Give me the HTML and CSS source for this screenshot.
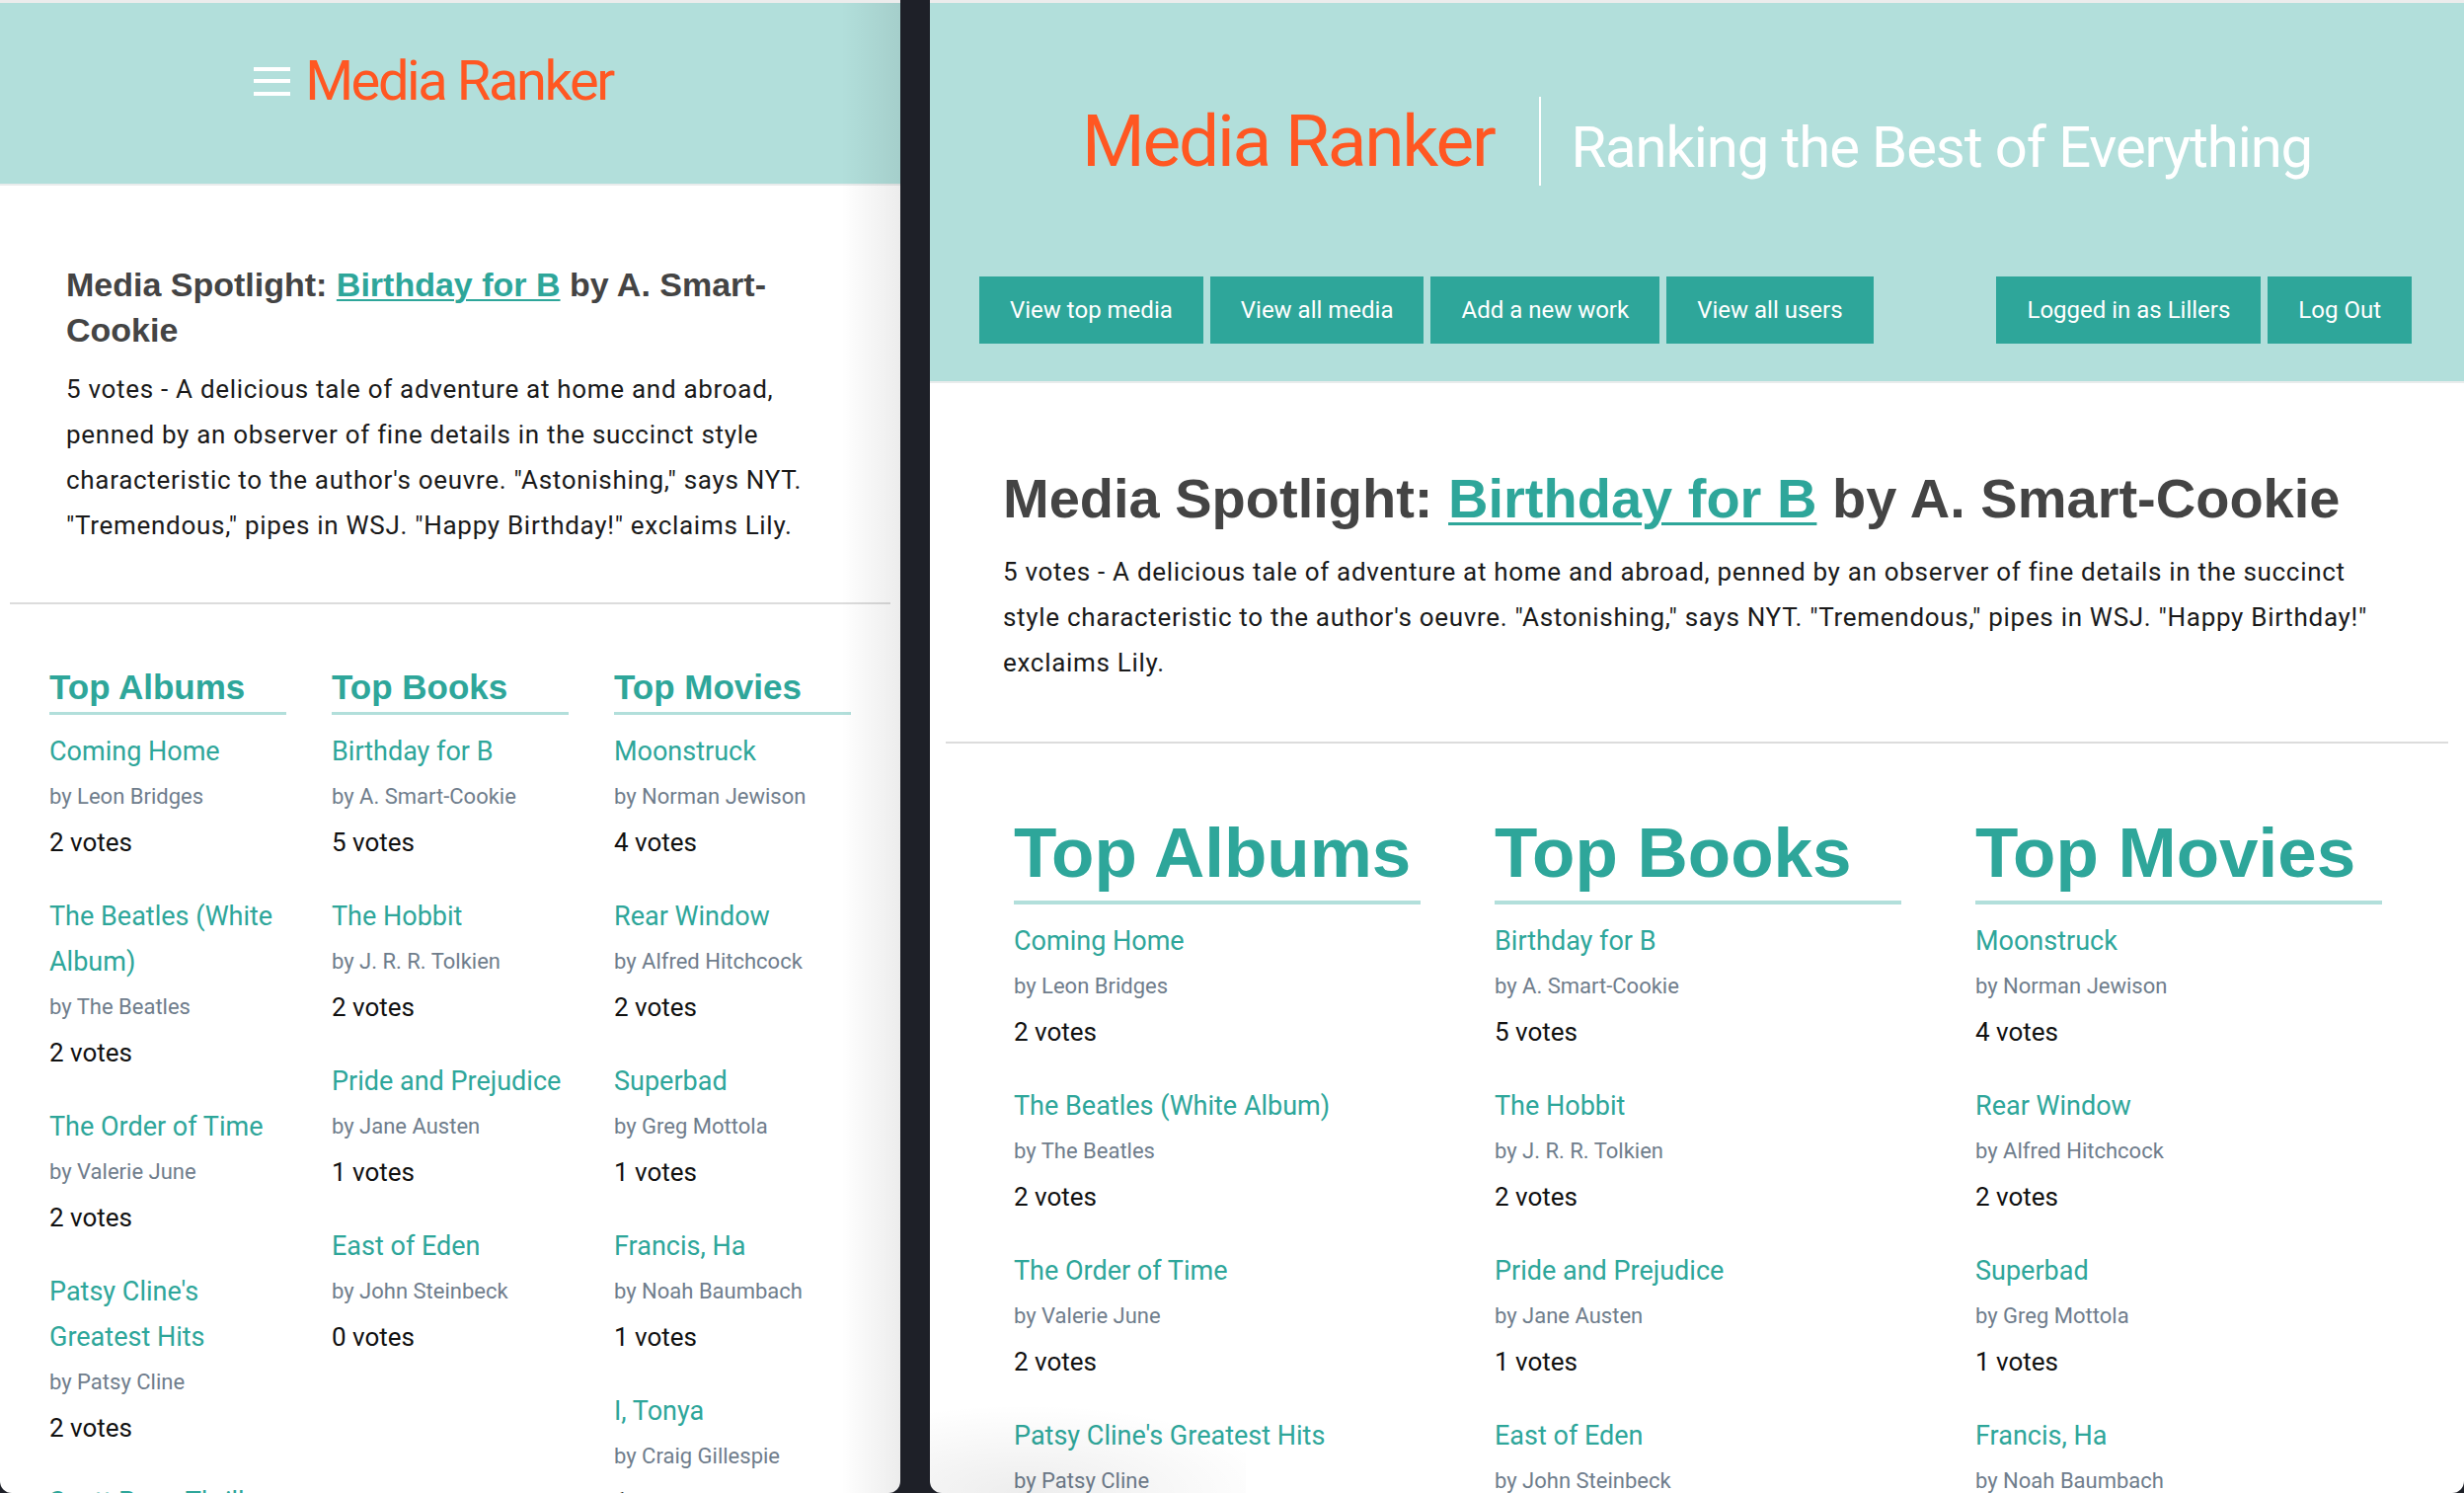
FILE: index.html
```html
<!DOCTYPE html>
<html lang="en">
<head>
<meta charset="utf-8">
<title>Media Ranker</title>
<link rel="stylesheet" href="styles.css">
</head>
<body>
<div class="desktop">

  <section class="window window-narrow">
    <header class="site-header header-small">
      <div class="title-bar">
        <svg class="menu-icon" width="37" height="29" viewBox="0 0 37 29" aria-hidden="true">
          <rect x="0" y="0" width="37" height="4" fill="#fff"/>
          <rect x="0" y="12" width="37" height="4" fill="#fff"/>
          <rect x="0" y="25" width="37" height="4" fill="#fff"/>
        </svg>
        <span class="brand brand-small">Media Ranker</span>
      </div>
    </header>
    <main class="content content-small">
      <section class="spotlight">
        <h2 class="spotlight-title">Media Spotlight: <a href="#">Birthday for B</a> by A. Smart-Cookie</h2>
        <p class="spotlight-text">5 votes - A delicious tale of adventure at home and abroad, penned by an observer of fine details in the succinct style characteristic to the author's oeuvre. "Astonishing," says NYT. "Tremendous," pipes in WSJ. "Happy Birthday!" exclaims Lily.</p>
      </section>
      <hr class="divider">
      <section class="top-lists">
        <div class="list-col">
          <h3 class="list-title">Top Albums</h3>
          <ul class="works">
            <li><a class="work-title" href="#">Coming Home</a><span class="work-by">by Leon Bridges</span><span class="work-votes">2 votes</span></li>
            <li><a class="work-title" href="#">The Beatles (White Album)</a><span class="work-by">by The Beatles</span><span class="work-votes">2 votes</span></li>
            <li><a class="work-title" href="#">The Order of Time</a><span class="work-by">by Valerie June</span><span class="work-votes">2 votes</span></li>
            <li><a class="work-title" href="#">Patsy Cline's Greatest Hits</a><span class="work-by">by Patsy Cline</span><span class="work-votes">2 votes</span></li>
            <li><a class="work-title" href="#">Scott Pope Thriller</a><span class="work-by">by Scott Pope</span><span class="work-votes">1 votes</span></li>
          </ul>
        </div>
        <div class="list-col">
          <h3 class="list-title">Top Books</h3>
          <ul class="works">
            <li><a class="work-title" href="#">Birthday for B</a><span class="work-by">by A. Smart-Cookie</span><span class="work-votes">5 votes</span></li>
            <li><a class="work-title" href="#">The Hobbit</a><span class="work-by">by J. R. R. Tolkien</span><span class="work-votes">2 votes</span></li>
            <li><a class="work-title" href="#">Pride and Prejudice</a><span class="work-by">by Jane Austen</span><span class="work-votes">1 votes</span></li>
            <li><a class="work-title" href="#">East of Eden</a><span class="work-by">by John Steinbeck</span><span class="work-votes">0 votes</span></li>
          </ul>
        </div>
        <div class="list-col">
          <h3 class="list-title">Top Movies</h3>
          <ul class="works">
            <li><a class="work-title" href="#">Moonstruck</a><span class="work-by">by Norman Jewison</span><span class="work-votes">4 votes</span></li>
            <li><a class="work-title" href="#">Rear Window</a><span class="work-by">by Alfred Hitchcock</span><span class="work-votes">2 votes</span></li>
            <li><a class="work-title" href="#">Superbad</a><span class="work-by">by Greg Mottola</span><span class="work-votes">1 votes</span></li>
            <li><a class="work-title" href="#">Francis, Ha</a><span class="work-by">by Noah Baumbach</span><span class="work-votes">1 votes</span></li>
            <li><a class="work-title" href="#">I, Tonya</a><span class="work-by">by Craig Gillespie</span><span class="work-votes">1 votes</span></li>
          </ul>
        </div>
      </section>
    </main>
  </section>

  <section class="window window-wide">
    <header class="site-header header-large">
      <div class="brand-row">
        <span class="brand brand-large">Media Ranker</span>
        <span class="brand-divider"></span>
        <span class="tagline">Ranking the Best of Everything</span>
      </div>
      <nav class="main-nav">
        <div class="nav-group">
          <a class="nav-button" href="#">View top media</a>
          <a class="nav-button" href="#">View all media</a>
          <a class="nav-button" href="#">Add a new work</a>
          <a class="nav-button" href="#">View all users</a>
        </div>
        <div class="nav-group">
          <a class="nav-button" href="#">Logged in as Lillers</a>
          <a class="nav-button" href="#">Log Out</a>
        </div>
      </nav>
    </header>
    <main class="content content-large">
      <section class="spotlight">
        <h2 class="spotlight-title">Media Spotlight: <a href="#">Birthday for B</a> by A. Smart-Cookie</h2>
        <p class="spotlight-text">5 votes - A delicious tale of adventure at home and abroad, penned by an observer of fine details in the succinct style characteristic to the author's oeuvre. "Astonishing," says NYT. "Tremendous," pipes in WSJ. "Happy Birthday!" exclaims Lily.</p>
      </section>
      <hr class="divider">
      <section class="top-lists">
        <div class="list-col">
          <h3 class="list-title">Top Albums</h3>
          <ul class="works">
            <li><a class="work-title" href="#">Coming Home</a><span class="work-by">by Leon Bridges</span><span class="work-votes">2 votes</span></li>
            <li><a class="work-title" href="#">The Beatles (White Album)</a><span class="work-by">by The Beatles</span><span class="work-votes">2 votes</span></li>
            <li><a class="work-title" href="#">The Order of Time</a><span class="work-by">by Valerie June</span><span class="work-votes">2 votes</span></li>
            <li><a class="work-title" href="#">Patsy Cline's Greatest Hits</a><span class="work-by">by Patsy Cline</span><span class="work-votes">2 votes</span></li>
          </ul>
        </div>
        <div class="list-col">
          <h3 class="list-title">Top Books</h3>
          <ul class="works">
            <li><a class="work-title" href="#">Birthday for B</a><span class="work-by">by A. Smart-Cookie</span><span class="work-votes">5 votes</span></li>
            <li><a class="work-title" href="#">The Hobbit</a><span class="work-by">by J. R. R. Tolkien</span><span class="work-votes">2 votes</span></li>
            <li><a class="work-title" href="#">Pride and Prejudice</a><span class="work-by">by Jane Austen</span><span class="work-votes">1 votes</span></li>
            <li><a class="work-title" href="#">East of Eden</a><span class="work-by">by John Steinbeck</span><span class="work-votes">0 votes</span></li>
          </ul>
        </div>
        <div class="list-col">
          <h3 class="list-title">Top Movies</h3>
          <ul class="works">
            <li><a class="work-title" href="#">Moonstruck</a><span class="work-by">by Norman Jewison</span><span class="work-votes">4 votes</span></li>
            <li><a class="work-title" href="#">Rear Window</a><span class="work-by">by Alfred Hitchcock</span><span class="work-votes">2 votes</span></li>
            <li><a class="work-title" href="#">Superbad</a><span class="work-by">by Greg Mottola</span><span class="work-votes">1 votes</span></li>
            <li><a class="work-title" href="#">Francis, Ha</a><span class="work-by">by Noah Baumbach</span><span class="work-votes">1 votes</span></li>
          </ul>
        </div>
      </section>
    </main>
  </section>

</div>
</body>
</html>
```

FILE: styles.css
```css
html, body {
  margin: 0;
  padding: 0;
}

body {
  width: 2496px;
  height: 1512px;
  overflow: hidden;
  background: #1e2028;
  font-family: Roboto, "Liberation Sans", Arial, sans-serif;
  color: #1a1a1a;
}

.desktop {
  display: flex;
  gap: 30px;
  height: 1512px;
}

.window {
  position: relative;
  box-sizing: border-box;
  height: 1512px;
  overflow: hidden;
  background: #fff;
  border-top: 3px solid #ececec;
  border-radius: 0 0 12px 12px;
}

.window-narrow {
  flex: none;
  width: 912px;
}

.window-narrow::after {
  content: "";
  position: absolute;
  top: 0;
  right: 0;
  bottom: 0;
  width: 60px;
  background: linear-gradient(to right, rgba(0, 0, 0, 0), rgba(0, 0, 0, 0.075));
  pointer-events: none;
}

.window-wide {
  flex: 1;
}

.window-wide::after {
  content: "";
  position: absolute;
  left: 0;
  bottom: 0;
  width: 320px;
  height: 110px;
  background: radial-gradient(ellipse 260px 90px at 30% 100%, rgba(0, 0, 0, 0.07), rgba(0, 0, 0, 0));
  pointer-events: none;
}

/* Header */
.site-header {
  box-sizing: border-box;
  background: #b2dfdb;
  border-bottom: 2px solid #e9ecec;
}

.header-small {
  height: 185px;
}

.header-large {
  height: 385px;
}

.title-bar {
  display: flex;
  justify-content: center;
  align-items: center;
  padding: 51px 34px 0 0;
}

.menu-icon {
  display: block;
  margin-right: 15px;
}

.brand {
  color: #ff5722;
  white-space: nowrap;
}

.brand-small {
  font-size: 56px;
  line-height: 56px;
  letter-spacing: -2.4px;
}

.brand-row {
  display: flex;
  justify-content: center;
  align-items: center;
  height: 90px;
  padding-top: 95px;
}

.brand-large {
  font-size: 73px;
  line-height: 90px;
  letter-spacing: -2.2px;
}

.brand-divider {
  width: 2px;
  height: 90px;
  background: #fff;
  margin: 0 30px 0 46px;
}

.tagline {
  color: #fff;
  font-size: 58px;
  line-height: 90px;
  letter-spacing: -1.1px;
  margin-top: 12px;
  white-space: nowrap;
}

.main-nav {
  display: flex;
  justify-content: space-between;
  margin-top: 92px;
  padding: 0 53px 0 50px;
}

.nav-group {
  display: flex;
  gap: 7px;
}

.nav-button {
  display: flex;
  align-items: center;
  height: 68px;
  padding: 0 31px;
  background: #2ea69a;
  color: #fff;
  font-size: 24px;
  text-decoration: none;
  white-space: nowrap;
}

/* Content */
.spotlight-title {
  margin: 0;
  font-family: "Liberation Sans", Arial, sans-serif;
  font-weight: 700;
  color: #444;
}

.spotlight-title a {
  color: #2ea69a;
  text-decoration: underline;
  text-decoration-thickness: 3px;
  text-underline-offset: 5px;
}

.spotlight-text {
  margin: 0;
  font-size: 26px;
  line-height: 46px;
  letter-spacing: 0.7px;
  color: #1a1a1a;
}

.divider {
  border: none;
  height: 2px;
  background: #dcdcdc;
}

.top-lists {
  display: grid;
  grid-template-columns: repeat(3, 1fr);
}

.list-title {
  margin: 0;
  font-family: "Liberation Sans", Arial, sans-serif;
  font-weight: 700;
  color: #2ea69a;
  border-bottom-style: solid;
  border-bottom-color: #b2dfdb;
}

.works {
  list-style: none;
  margin: 14px 0 0;
  padding: 0;
}

.works li {
  margin-bottom: 29px;
}

.work-title {
  display: block;
  font-size: 27px;
  line-height: 46px;
  color: #2ea69a;
  text-decoration: none;
}

.work-by {
  display: block;
  font-size: 22px;
  line-height: 46px;
  color: #6f7d8c;
}

.work-votes {
  display: block;
  font-size: 26px;
  line-height: 46px;
  color: #111;
}

/* Narrow window sizing */
.content-small .spotlight {
  padding: 0 67px;
}

.content-small .spotlight-title {
  margin-top: 77px;
  margin-bottom: 14px;
  font-size: 34px;
  line-height: 46px;
}

.content-small .spotlight-title a {
  text-decoration-thickness: 2px;
  text-underline-offset: 3px;
}

.content-small .divider {
  margin: 55px 10px 0;
}

.content-small .top-lists {
  grid-template-columns: repeat(3, 240px);
  column-gap: 46px;
  padding: 64px 0 0 50px;
}

.content-small .list-title {
  font-size: 35px;
  line-height: 40px;
  padding-bottom: 5px;
  border-bottom-width: 3px;
}

/* Wide window sizing */
.content-large .spotlight {
  padding: 0 79px 0 74px;
}

.content-large .spotlight-title {
  margin-top: 83px;
  margin-bottom: 18px;
  font-size: 56px;
  line-height: 67px;
}

.content-large .divider {
  margin: 57px 16px 0;
}

.content-large .top-lists {
  grid-template-columns: repeat(3, 412px);
  column-gap: 75px;
  padding: 71px 0 0 85px;
}

.content-large .list-title {
  font-size: 71px;
  line-height: 80px;
  padding-bottom: 8px;
  border-bottom-width: 4px;
}
```
